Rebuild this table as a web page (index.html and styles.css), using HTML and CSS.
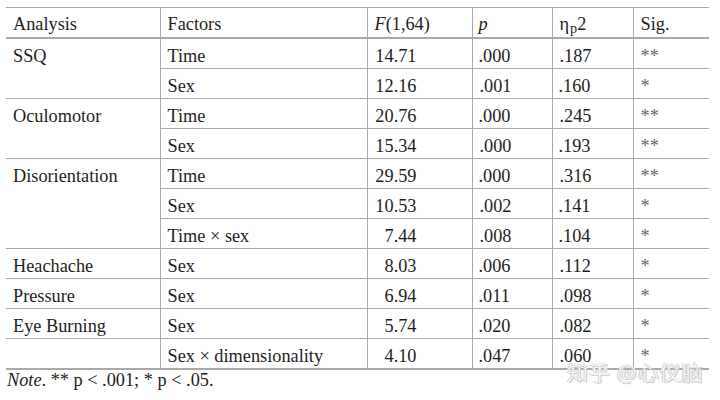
FILE: index.html
```html
<!DOCTYPE html>
<html>
<head>
<meta charset="utf-8">
<link rel="stylesheet" href="styles.css">
</head>
<body>
<div class="page">
  <table class="stats">
    <colgroup>
      <col class="c1"><col class="c2"><col class="c3"><col class="c4"><col class="c5"><col class="c6">
    </colgroup>
    <thead>
      <tr>
        <th>Analysis</th>
        <th>Factors</th>
        <th><i>F</i>(1,64)</th>
        <th><i>p</i></th>
        <th>η<span class="sub">p</span>2</th>
        <th>Sig.</th>
      </tr>
    </thead>
    <tbody>
      <tr class="grp"><td rowspan="2">SSQ</td><td>Time</td><td><span class="num">14.71</span></td><td>.000</td><td>.187</td><td class="sig">**</td></tr>
      <tr><td>Sex</td><td><span class="num">12.16</span></td><td>.001</td><td>.160</td><td class="sig">*</td></tr>
      <tr class="grp"><td rowspan="2">Oculomotor</td><td>Time</td><td><span class="num">20.76</span></td><td>.000</td><td>.245</td><td class="sig">**</td></tr>
      <tr><td>Sex</td><td><span class="num">15.34</span></td><td>.000</td><td>.193</td><td class="sig">**</td></tr>
      <tr class="grp"><td rowspan="3">Disorientation</td><td>Time</td><td><span class="num">29.59</span></td><td>.000</td><td>.316</td><td class="sig">**</td></tr>
      <tr><td>Sex</td><td><span class="num">10.53</span></td><td>.002</td><td>.141</td><td class="sig">*</td></tr>
      <tr><td>Time × sex</td><td><span class="num">7.44</span></td><td>.008</td><td>.104</td><td class="sig">*</td></tr>
      <tr class="grp"><td>Heachache</td><td>Sex</td><td><span class="num">8.03</span></td><td>.006</td><td>.112</td><td class="sig">*</td></tr>
      <tr class="grp"><td>Pressure</td><td>Sex</td><td><span class="num">6.94</span></td><td>.011</td><td>.098</td><td class="sig">*</td></tr>
      <tr class="grp"><td>Eye Burning</td><td>Sex</td><td><span class="num">5.74</span></td><td>.020</td><td>.082</td><td class="sig">*</td></tr>
      <tr class="grp last"><td></td><td>Sex × dimensionality</td><td><span class="num">4.10</span></td><td>.047</td><td>.060</td><td class="sig">*</td></tr>
    </tbody>
  </table>
  <p class="note"><i>Note</i>. ** p &lt; .001; * p &lt; .05.</p>
  <div class="watermark">知乎 @心仪脑</div>
</div>
</body>
</html>
```

FILE: styles.css
```css
html, body {
  margin: 0;
  padding: 0;
  background: #ffffff;
}

.page {
  position: relative;
  width: 720px;
  height: 400px;
  overflow: hidden;
  font-family: "Liberation Serif", "Times New Roman", serif;
  font-size: 18.3px;
  color: #1e1e1e;
}

.stats {
  margin: 7px 0 0 6px;
  width: 703px;
  border-collapse: collapse;
  table-layout: fixed;
  border-top: 1px solid #a9a9a9;
  border-bottom: 2px solid #a9a9a9;
}

.c1 { width: 154px; }
.c2 { width: 207px; }
.c3 { width: 105px; }
.c4 { width: 80px; }
.c5 { width: 81px; }
.c6 { width: 76px; }

.stats th,
.stats td {
  box-sizing: border-box;
  height: 30px;
  padding: 5px 7px 0;
  line-height: 24px;
  vertical-align: top;
  text-align: left;
  font-weight: normal;
  white-space: nowrap;
  overflow: hidden;
  border-left: 1px solid #a9a9a9;
  border-top: 1px solid #a9a9a9;
}

.stats th:first-child,
.stats tr.grp td:first-child {
  border-left: none;
}

.stats th {
  height: 30px;
  padding-top: 4px;
  border-top: none;
  border-bottom: 2px solid #a9a9a9;
}

.stats th:nth-child(4),
.stats td:nth-child(4) { padding-left: 6px; }

.num {
  display: inline-block;
  width: 42px;
  text-align: right;
}

.sub {
  font-size: 0.78em;
  position: relative;
  top: 0.18em;
  margin-left: 1px;
}

.sig {
  color: #666666;
}

.note {
  margin: -2px 0 0 7px;
  line-height: 24px;
}

.watermark {
  position: absolute;
  left: 567px;
  top: 356px;
  font-family: "Noto Sans CJK SC", sans-serif;
  font-size: 21px;
  letter-spacing: 1px;
  color: rgba(255, 255, 255, 0.9);
  text-shadow: 0 0 1px #b0b0b0, 1px 1px 0 #d0d0d0, -1px 0 0 #d8d8d8;
}
```
